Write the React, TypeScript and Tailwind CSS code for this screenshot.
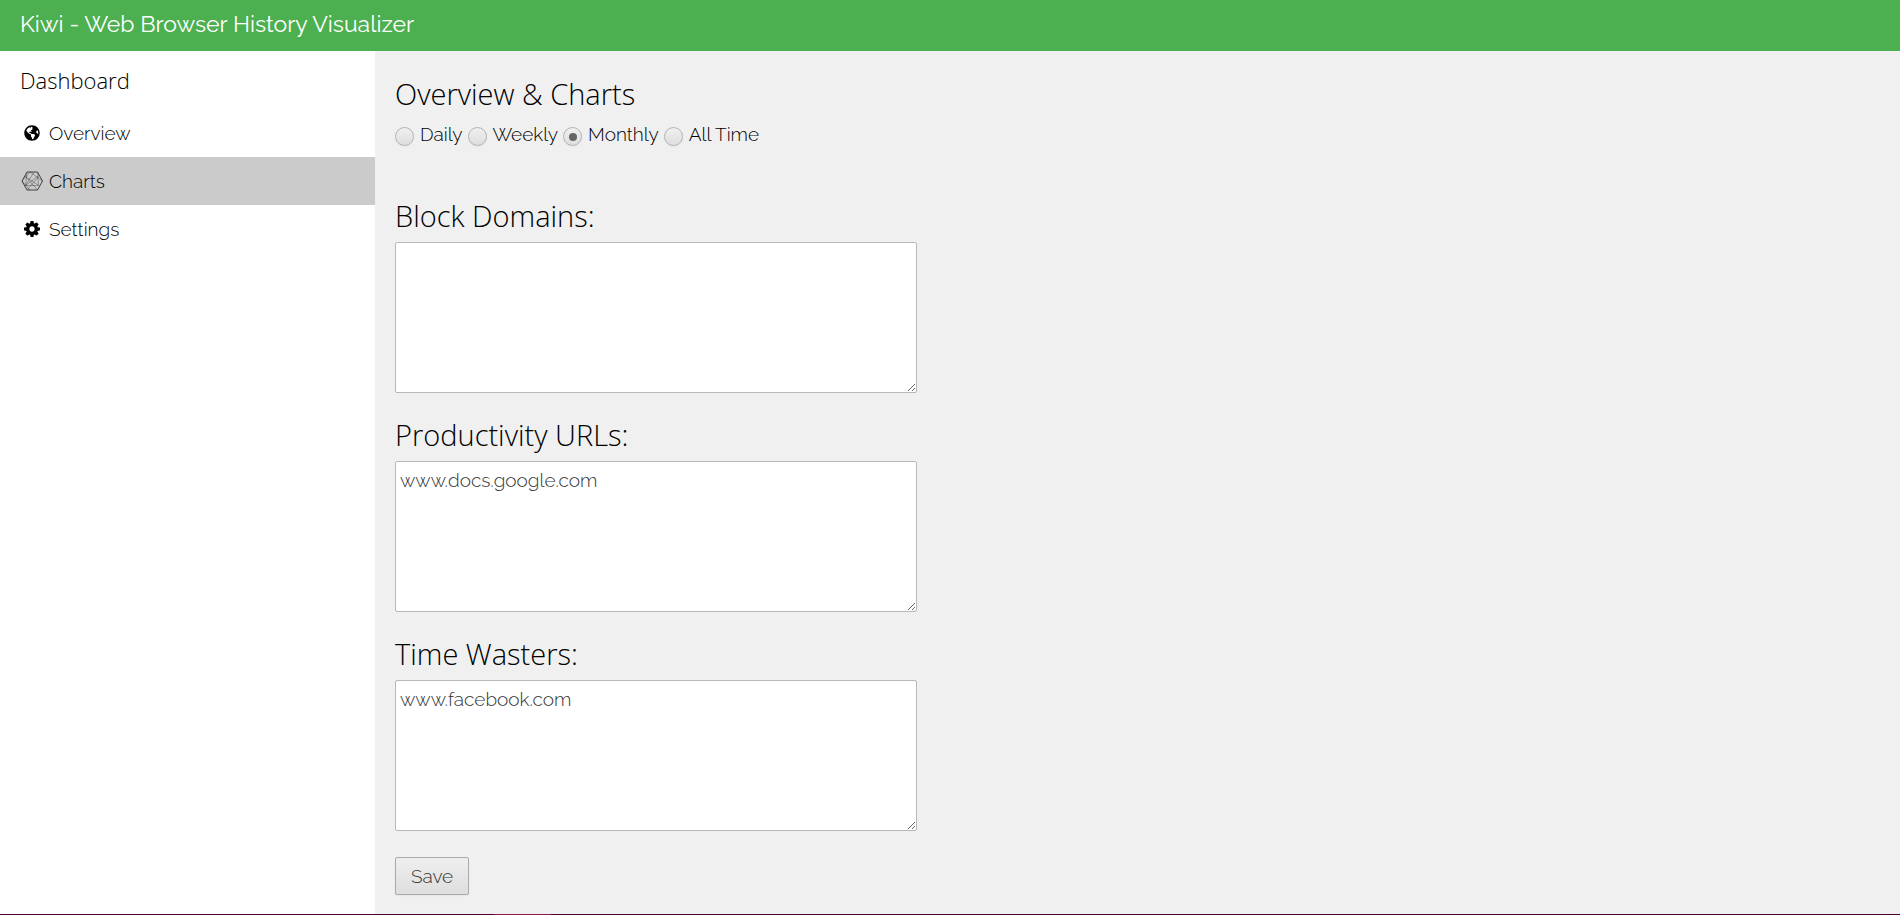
import { useState } from "react";
import { FaGlobeAmericas } from "react-icons/fa";

function PolyIcon() {
  return (
    <svg viewBox="0 0 22 20" className="h-5 w-[22px]" fill="none" stroke="#333" aria-hidden="true">
      <path d="M6 1h10.500l5 9-5 9H6L1 10z" strokeWidth="0.900" />
      <path d="M6 1 4.500 14.500h13L16.500 1M1 10l8-9 12.500 9M4.500 5.500 17.500 14.500M4.500 14.500 18 4.500M6 19l11.500-13M9 19 1 10M13 1 4.500 14.500M16.500 19 4.500 5.500" strokeWidth="0.400" />
    </svg>
  );
}

function CogIcon() {
  return (
    <svg viewBox="0 128 1536 1536" className="size-4" fill="currentColor" aria-hidden="true">
      <path d="M1024 896q0-106-75-181t-181-75-181 75-75 181 75 181 181 75 181-75 75-181zm512-109v222q0 12-8 23t-20 13l-185 28q-19 54-39 91 35 50 107 138 10 12 10 25t-9 23q-27 37-99 108t-94 71q-12 0-26-9l-138-108q-44 23-91 38-16 136-29 186-7 28-36 28h-222q-14 0-24.500-8.500t-11.500-21.500l-28-184q-49-16-90-37l-141 107q-10 9-25 9-14 0-25-11-126-114-165-168-7-10-7-23 0-12 8-23 15-21 51-66.500t54-70.500q-27-50-41-99l-183-27q-13-2-21-12.500t-8-23.500v-222q0-12 8-23t19-13l186-28q14-46 39-92-40-57-107-138-10-12-10-24 0-10 9-23 26-36 98.500-107.500t94.500-71.500q13 0 26 10l138 107q44-23 91-38 16-136 29-186 7-28 36-28h222q14 0 24.500 8.500t11.500 21.500l28 184q49 16 90 37l142-107q9-9 24-9 13 0 25 10 129 119 165 170 7 8 7 22 0 12-8 23-15 21-51 66.500t-54 70.500q26 50 41 98l183 28q13 2 21 12.500t8 23.500z" />
    </svg>
  );
}

const navItems = [
  { label: "Overview", icon: <FaGlobeAmericas className="size-4" /> },
  { label: "Charts", icon: <PolyIcon /> },
  { label: "Settings", icon: <CogIcon /> },
];

const ranges = ["Daily", "Weekly", "Monthly", "All Time"];

const fields = [
  { id: "block", label: "Block Domains:", value: "" },
  { id: "productive", label: "Productivity URLs:", value: "www.docs.google.com" },
  { id: "wasters", label: "Time Wasters:", value: "www.facebook.com" },
];

export default function App() {
  const [range, setRange] = useState("Monthly");

  return (
    <div className="flex min-h-screen flex-col bg-[#f0f0f0] font-['Raleway','Lato',sans-serif] text-[19px] font-light text-black">
      <header className="bg-[#4caf50] px-5 pt-2 pb-[11px] text-white">
        <h1 className="text-[23px] leading-8 font-normal">Kiwi - Web Browser History Visualizer</h1>
      </header>
      <div className="flex grow">
        <aside className="w-[375px] shrink-0 bg-white">
          <h2 className="px-5 py-3.5 font-['Segoe_UI','Open_Sans',sans-serif] text-[22px] leading-[30px] font-light">
            Dashboard
          </h2>
          <nav>
            {navItems.map((item) => (
              <a
                key={item.label}
                href="#"
                className={
                  item.label === "Charts"
                    ? "flex h-12 items-center gap-[5px] bg-[#cbcbcb] px-5"
                    : "flex h-12 items-center gap-[5px] px-5"
                }
              >
                <span className="flex w-6 justify-center">{item.icon}</span>
                {item.label}
              </a>
            ))}
          </nav>
        </aside>
        <main className="grow px-5 pt-[23px] pb-4">
          <h2 className="font-['Segoe_UI','Open_Sans',sans-serif] text-[29px] leading-10 font-light">
            Overview &amp; Charts
          </h2>
          <div className="mt-1 mb-[46px] flex h-8 items-center gap-[5px]">
            {ranges.map((name) => (
              <label key={name} className="flex items-center gap-1.5">
                <input
                  type="radio"
                  name="range"
                  checked={range === name}
                  onChange={() => setRange(name)}
                  className="mt-[5px] grid size-[19px] appearance-none place-items-center rounded-full border border-[#b4b4b4] bg-linear-to-b from-[#f0f0f0] to-[#dedede] shadow-xs before:size-2 before:rounded-full checked:before:bg-[#666]"
                />
                {name}
              </label>
            ))}
          </div>
          <form onSubmit={(event) => event.preventDefault()}>
            {fields.map((field) => (
              <div key={field.id} className="mb-[22px]">
                <label
                  htmlFor={field.id}
                  className="mb-1.5 block font-['Segoe_UI','Open_Sans',sans-serif] text-[29px] leading-10 font-light"
                >
                  {field.label}
                </label>
                <textarea
                  id={field.id}
                  defaultValue={field.value}
                  className="block h-[151px] w-[522px] max-w-full rounded-xs border border-[#b8b8b8] bg-white px-1 py-[5px] leading-[26px] text-[#333]"
                />
              </div>
            ))}
            <button
              type="submit"
              className="mt-1 h-[38px] rounded-xs border border-[#aaa] bg-linear-to-b from-[#eee] to-[#dedede] px-[15px] text-[#333] shadow-xs"
            >
              Save
            </button>
          </form>
        </main>
      </div>
      <footer className="flex h-px bg-[#4b0030]">
        <div className="ml-[26%] w-[3%] bg-[#8a1a4a]" />
      </footer>
    </div>
  );
}
